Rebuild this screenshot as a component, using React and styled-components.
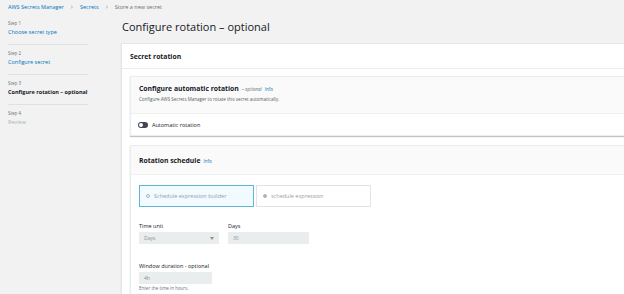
import React from "react";
import styled, { createGlobalStyle } from "styled-components";

const Global = createGlobalStyle`
  html, body {
    margin: 0;
    padding: 0;
    background: #f2f2f2;
    font-family: "Open Sans", "Noto Sans", sans-serif;
    color: #16191f;
    overflow: hidden;
  }
`;

// 페이지 전체
const Page = styled.div`
  width: 624px;
  height: 294px;
  overflow: hidden;
  padding: 2px 0 0 8px;
  box-sizing: border-box;
`;

const Crumbs = styled.div`
  display: flex;
  align-items: center;
  gap: 7px;
  height: 9px;
  font-size: 5.5px;
  color: #687078;
`;

const CrumbLink = styled.span`
  color: #0073bb;
`;

const Sep = styled.span`
  color: #879196;
  font-size: 7px;
`;

const Layout = styled.div`
  display: flex;
  gap: 33px;
  margin-top: 8px;
`;

// 왼쪽 단계 목록
const Steps = styled.div`
  width: 80px;
  flex-shrink: 0;
  padding-top: 1px;
`;

const Step = styled.div`
  padding-bottom: 6px;
  border-bottom: 1px solid ${(p) => (p.$last ? "transparent" : "#e0e0e0")};
  margin-bottom: 5px;
`;

const StepLabel = styled.div`
  font-size: 4.5px;
  color: #687078;
  line-height: 7px;
`;

const StepName = styled.div`
  font-size: 5.5px;
  line-height: 11px;
  white-space: nowrap;
  color: ${(p) => (p.$state === "active" ? "#16191f" : p.$state === "off" ? "#aab7b8" : "#0073bb")};
  font-weight: ${(p) => (p.$state === "active" ? 700 : 400)};
`;

const Main = styled.div`
  flex: 1;
  min-width: 560px;
`;

const Title = styled.h1`
  margin: 0 0 0 1px;
  font-size: 11px;
  font-weight: 400;
  line-height: 16px;
`;

const Card = styled.div`
  margin-top: 8px;
  background: #ffffff;
  border: 1px solid #e6e6e6;
  box-shadow: 0 1px 1px rgba(0, 28, 36, 0.15);
`;

const CardHead = styled.div`
  padding: 0 8px;
  height: 24px;
  display: flex;
  align-items: center;
  font-size: 6.8px;
  font-weight: 700;
  border-bottom: 1px solid #eaeded;
`;

const CardBody = styled.div`
  padding: 7px 8px 0;
  display: flex;
  flex-direction: column;
  gap: 9px;
`;

const Inner = styled.div`
  background: #ffffff;
  border: 1px solid #eaeded;
  box-shadow: 0 1px 1px rgba(0, 28, 36, 0.25);
`;

const InnerHead = styled.div`
  background: #fafafa;
  padding: 6px 8px 0;
  height: ${(p) => p.$h}px;
  box-sizing: border-box;
  border-bottom: 1px solid #f0f0f0;
`;

const InnerTitle = styled.div`
  display: flex;
  align-items: baseline;
  gap: 3px;
  font-size: 6.8px;
  font-weight: 700;
  line-height: 12px;
  margin-top: ${(p) => p.$top || 0}px;
`;

const Optional = styled.span`
  font-size: 4.5px;
  font-weight: 400;
  font-style: italic;
  color: #687078;
`;

const Info = styled.span`
  font-size: 4.5px;
  font-weight: 400;
  color: #0073bb;
`;

const Desc = styled.div`
  font-size: 4.5px;
  color: #545b64;
  margin-top: 1px;
`;

const ToggleRow = styled.div`
  height: 21px;
  padding: 0 7px;
  display: flex;
  align-items: center;
  gap: 4px;
  font-size: 5.5px;
  color: #16191f;
`;

const Toggle = styled.span`
  width: 10px;
  height: 6px;
  border-radius: 3px;
  background: #414750;
  position: relative;
  &::after {
    content: "";
    position: absolute;
    left: 1px;
    top: 1px;
    width: 4px;
    height: 4px;
    border-radius: 50%;
    background: #fff;
  }
`;

const ScheduleBody = styled.div`
  padding: 10px 8px 4px;
`;

const Tiles = styled.div`
  display: flex;
  gap: 2px;
`;

const Tile = styled.div`
  width: 115px;
  height: 22px;
  box-sizing: border-box;
  display: flex;
  align-items: center;
  gap: 4px;
  padding: 0 6px;
  font-size: 5.5px;
  color: #95a0a5;
  border: 1px solid ${(p) => (p.$selected ? "#5fb7d8" : "#e3e3e3")};
  background: ${(p) => (p.$selected ? "#f1faff" : "#ffffff")};
`;

const Radio = styled.span`
  width: 4px;
  height: 4px;
  border-radius: 50%;
  box-sizing: border-box;
  border: 1px solid #aab7b8;
  background: ${(p) => (p.$filled ? "#aab7b8" : "transparent")};
`;

const FieldRow = styled.div`
  display: flex;
  gap: 9px;
  margin-top: ${(p) => p.$top}px;
`;

const Field = styled.div`
  display: flex;
  flex-direction: column;
`;

const Label = styled.div`
  font-size: 5.5px;
  color: #16191f;
  line-height: 8px;
  margin-bottom: 2px;
`;

const Input = styled.div`
  width: ${(p) => p.$w}px;
  height: 12px;
  box-sizing: border-box;
  background: #eaeded;
  display: flex;
  align-items: center;
  justify-content: space-between;
  padding: 0 5px;
  font-size: 5px;
  color: #879196;
`;

const Caret = styled.span`
  width: 0;
  height: 0;
  border-left: 2.5px solid transparent;
  border-right: 2.5px solid transparent;
  border-top: 3px solid #879196;
`;

const Hint = styled.div`
  font-size: 4.5px;
  color: #687078;
  margin-top: 1px;
`;

const steps = [
  { label: "Step 1", name: "Choose secret type", state: "done" },
  { label: "Step 2", name: "Configure secret", state: "done" },
  { label: "Step 3", name: "Configure rotation – optional", state: "active" },
  { label: "Step 4", name: "Review", state: "off" },
];

export default function App() {
  return (
    <>
      <Global />
      <Page>
        <Crumbs>
          <CrumbLink>AWS Secrets Manager</CrumbLink>
          <Sep>›</Sep>
          <CrumbLink>Secrets</CrumbLink>
          <Sep>›</Sep>
          <span>Store a new secret</span>
        </Crumbs>
        <Layout>
          <Steps>
            {steps.map((s, i) => (
              <Step key={s.label} $last={i === steps.length - 1}>
                <StepLabel>{s.label}</StepLabel>
                <StepName $state={s.state}>{s.name}</StepName>
              </Step>
            ))}
          </Steps>
          <Main>
            <Title>Configure rotation – optional</Title>
            <Card>
              <CardHead>Secret rotation</CardHead>
              <CardBody>
                <Inner>
                  <InnerHead $h={37}>
                    <InnerTitle>
                      Configure automatic rotation
                      <Optional>– optional</Optional>
                      <Info>Info</Info>
                    </InnerTitle>
                    <Desc>Configure AWS Secrets Manager to rotate this secret automatically.</Desc>
                  </InnerHead>
                  <ToggleRow>
                    <Toggle />
                    Automatic rotation
                  </ToggleRow>
                </Inner>
                <Inner>
                  <InnerHead $h={29}>
                    <InnerTitle $top={3}>
                      Rotation schedule
                      <Info>Info</Info>
                    </InnerTitle>
                  </InnerHead>
                  <ScheduleBody>
                    <Tiles>
                      <Tile $selected>
                        <Radio />
                        Schedule expression builder
                      </Tile>
                      <Tile>
                        <Radio $filled />
                        schedule expression
                      </Tile>
                    </Tiles>
                    <FieldRow $top={15}>
                      <Field>
                        <Label>Time unit</Label>
                        <Input $w={80}>
                          Days
                          <Caret />
                        </Input>
                      </Field>
                      <Field>
                        <Label>Days</Label>
                        <Input $w={81}>30</Input>
                      </Field>
                    </FieldRow>
                    <FieldRow $top={18}>
                      <Field>
                        <Label>Window duration - optional</Label>
                        <Input $w={73}>4h</Input>
                        <Hint>Enter the time in hours.</Hint>
                      </Field>
                    </FieldRow>
                  </ScheduleBody>
                </Inner>
              </CardBody>
            </Card>
          </Main>
        </Layout>
      </Page>
    </>
  );
}
